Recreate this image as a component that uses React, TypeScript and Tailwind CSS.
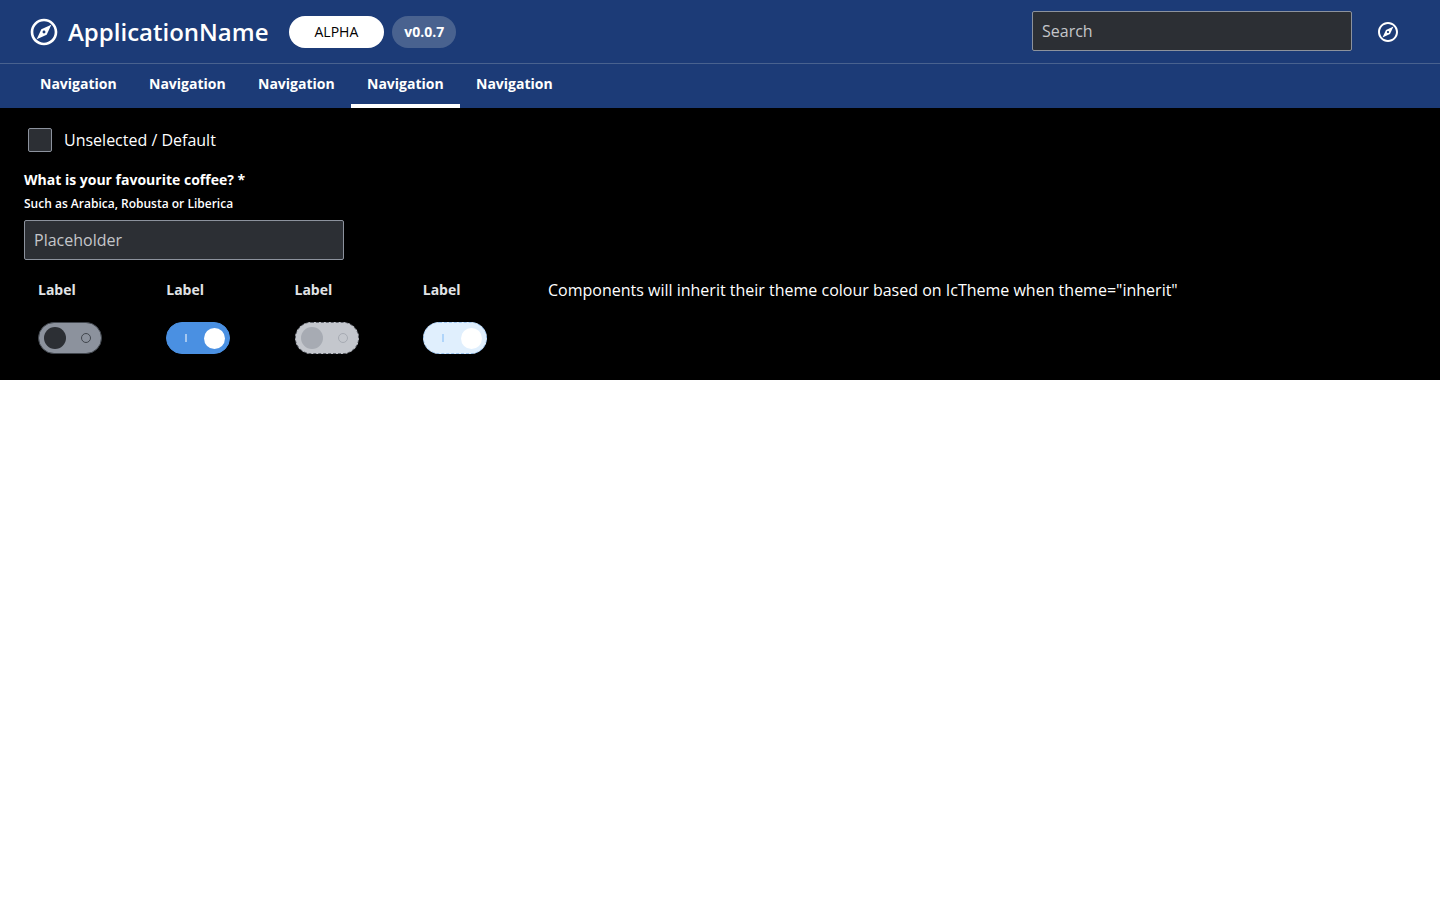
import { useState } from "react";

function CompassIcon({ className }: { className: string }) {
  return (
    <svg viewBox="0 0 24 24" fill="currentColor" aria-hidden="true" className={className}>
      <path
        fillRule="evenodd"
        d="M12 2C6.48 2 2 6.48 2 12s4.48 10 10 10 10-4.48 10-10S17.52 2 12 2zm0 18c-4.41 0-8-3.59-8-8s3.59-8 8-8 8 3.59 8 8-3.59 8-8 8zm-5.5-2.5l7.51-3.49L17.5 6.5 9.99 9.99 6.5 17.5zm5.5-6.6c.61 0 1.1.49 1.1 1.1s-.49 1.1-1.1 1.1-1.1-.49-1.1-1.1.49-1.1 1.1-1.1z"
      />
    </svg>
  );
}

const navItems = [1, 2, 3, 4, 5];
const currentItem = 4;

function TopNavigation() {
  return (
    <header className="bg-[#1c3b77] text-white">
      <div className="flex h-16 items-center border-b border-[#49628f] pr-10 pl-7">
        <a href="#home" className="flex items-center gap-2">
          <CompassIcon className="size-8" />
          <span className="text-2xl font-semibold">ApplicationName</span>
        </a>
        <span className="ml-5 flex h-8 items-center rounded-full bg-white px-[26px] text-sm text-black">ALPHA</span>
        <span className="ml-2 flex h-8 items-center rounded-full bg-[#49628f] px-3 text-sm font-bold">v0.0.7</span>
        <input
          type="search"
          aria-label="Search"
          placeholder="Search"
          className="mr-6 mb-0.5 ml-auto h-10 w-80 rounded-xs border border-[#8c929d] bg-[#2c2f34] px-[9px] text-base placeholder:text-[#c4c6ca]"
        />
        <button type="button" aria-label="Explore">
          <CompassIcon className="size-6" />
        </button>
      </div>
      <nav aria-label="Main" className="flex h-11 px-6">
        {navItems.map((id) => (
          <a
            key={id}
            href="#nav"
            aria-current={id === currentItem ? "page" : undefined}
            className={
              id === currentItem
                ? "flex min-w-[109px] items-center border-b-4 border-white px-4 text-sm font-bold"
                : "flex min-w-[109px] items-center border-b-4 border-transparent px-4 text-sm font-bold"
            }
          >
            Navigation
          </a>
        ))}
      </nav>
    </header>
  );
}

type SwitchProps = { id: string; initial?: boolean; disabled?: boolean };

function Switch({ id, initial = false, disabled = false }: SwitchProps) {
  const [on, setOn] = useState(initial);
  const track = disabled
    ? on
      ? "border-dashed border-[#9cc5f0] bg-[#e0effd]"
      : "border-dashed border-[#60646c] bg-[#c4c7cd]"
    : on
      ? "border-[#4a90e2] bg-[#4a90e2]"
      : "border-[#41464d] bg-[#8c929d]";
  const knob = on ? "bg-white" : disabled ? "bg-[#a7abb3]" : "bg-[#2c2f34]";
  const bar = disabled ? "bg-[#b0d5fa]" : "bg-[#a4c7f0]";
  const ring = disabled ? "border-[#a7abb3]" : "border-[#41464d]";
  return (
    <div className="flex flex-col items-start gap-5 pl-3.5">
      <label htmlFor={id} className="text-sm leading-6 font-bold text-[#e1e3e6]">
        Label
      </label>
      <button
        id={id}
        type="button"
        role="switch"
        aria-checked={on}
        disabled={disabled}
        onClick={() => setOn(!on)}
        className={`flex h-8 w-16 items-center justify-between rounded-full border ${track} ${on ? "pr-1 pl-[18px]" : "pr-2.5 pl-[5px]"}`}
      >
        {on ? (
          <>
            <span className={`h-2 w-0.5 ${bar}`} />
            <span className={`size-[21px] rounded-full ${knob}`} />
          </>
        ) : (
          <>
            <span className={`size-[22px] rounded-full ${knob}`} />
            <span className={`size-2.5 rounded-full border ${ring}`} />
          </>
        )}
      </button>
    </div>
  );
}

export default function App() {
  return (
    <div className="font-['Open_Sans',sans-serif]">
      <TopNavigation />
      <main className="bg-black px-6 pt-5 pb-[26px] text-white">
        <div className="flex items-center gap-3 pl-1">
          <input
            id="default-option"
            type="checkbox"
            className="size-6 appearance-none rounded-xs border border-[#8c929d] bg-[#2c2f34] checked:bg-[#4a90e2]"
          />
          <label htmlFor="default-option">Unselected / Default</label>
        </div>
        <div className="mt-4 flex flex-col items-start">
          <label htmlFor="coffee" className="text-sm leading-6 font-bold">
            What is your favourite coffee? *
          </label>
          <span id="coffee-hint" className="text-xs leading-6 font-semibold">
            Such as Arabica, Robusta or Liberica
          </span>
          <input
            id="coffee"
            type="text"
            required
            aria-describedby="coffee-hint"
            placeholder="Placeholder"
            className="mt-1 h-10 w-80 rounded-xs border border-[#8c929d] bg-[#2c2f34] px-[9px] text-base placeholder:text-[#c4c6ca]"
          />
        </div>
        <div className="mt-[18px] flex flex-wrap items-start gap-x-[11px]">
          <div className="grid w-[513px] grid-cols-4">
            <Switch id="switch-off" />
            <Switch id="switch-on" initial />
            <Switch id="switch-off-disabled" disabled />
            <Switch id="switch-on-disabled" initial disabled />
          </div>
          <p>Components will inherit their theme colour based on IcTheme when theme="inherit"</p>
        </div>
      </main>
    </div>
  );
}
